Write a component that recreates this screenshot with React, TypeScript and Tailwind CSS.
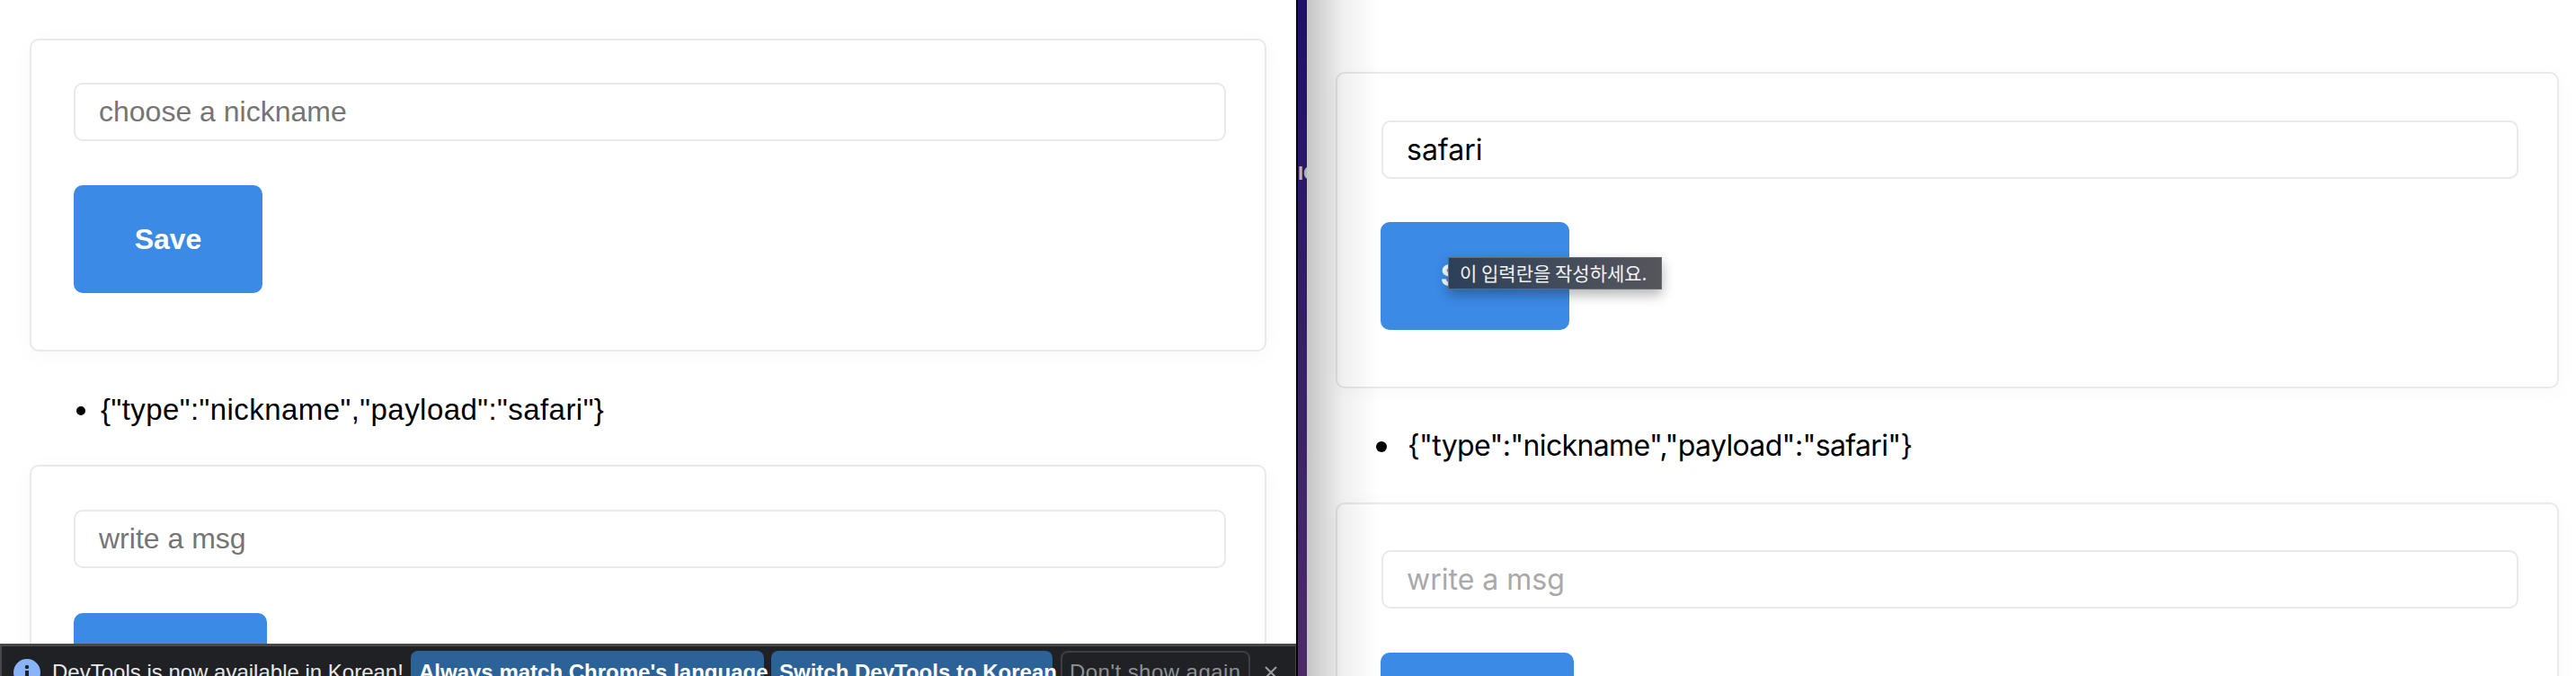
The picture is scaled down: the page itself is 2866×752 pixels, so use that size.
import React from "react";

const SANS = "font-['Liberation_Sans',Arial,sans-serif]";

function InfoIcon() {
  return (
    <svg width="30" height="30" viewBox="0 0 30 30" className="shrink-0">
      <circle cx="15" cy="15" r="15" fill="#8ab4f8" />
      <circle cx="15" cy="9" r="2.2" fill="#202124" />
      <rect x="13" y="13" width="4" height="11" fill="#202124" />
    </svg>
  );
}

function CloseIcon() {
  return (
    <svg width="16" height="16" viewBox="0 0 16 16" className="shrink-0">
      <path d="M2 1 L14 13 M14 1 L2 13" stroke="#9aa0a6" strokeWidth="2" fill="none" />
    </svg>
  );
}

function DevToolsBar() {
  return (
    <div className={`h-[36px] shrink-0 overflow-hidden flex items-start bg-[#202124] border-t-[3px] border-l-[2px] border-r-[1px] border-[#46484c] ${SANS} text-[24px] leading-[28px]`}>
      <div className="ml-[13px] mt-[14px]">
        <InfoIcon />
      </div>
      <span className="ml-[13px] mt-[15px] w-[399px] shrink-0 whitespace-nowrap text-[#e8eaed]">DevTools is now available in Korean!</span>
      <div className="mt-[5px] w-[393px] h-[50px] shrink-0 rounded-[8px] bg-[#2b6298] pl-[9px] pt-[10px] font-bold text-white whitespace-nowrap">Always match Chrome's language</div>
      <div className="ml-[8px] mt-[5px] w-[313px] h-[50px] shrink-0 rounded-[8px] bg-[#2b6298] pl-[9px] pt-[10px] font-bold text-white whitespace-nowrap">Switch DevTools to Korean</div>
      <div className="ml-[9px] mt-[5px] w-[211px] h-[50px] shrink-0 rounded-[8px] border-2 border-[#3c4043] pl-[8px] pt-[8px] tracking-[0.45px] text-[#8e9296] whitespace-nowrap">Don't show again</div>
      <div className="ml-[15px] mt-[22px]">
        <CloseIcon />
      </div>
    </div>
  );
}

function LeftPane() {
  return (
    <div className="w-[1442px] shrink-0 h-full flex flex-col bg-white">
      <div className="flex-1 min-h-0 overflow-hidden pl-[33px] pr-[33px] pt-[43px]">
        <section className="h-[348px] rounded-[10px] border-2 border-[#e9e9e9] bg-white shadow-[0_4px_24px_rgba(0,0,0,0.03)] pl-[47px] pr-[43px] pt-[47px]">
          <input
            readOnly
            placeholder="choose a nickname"
            className={`block w-full h-[65px] rounded-[10px] border-2 border-[#e9e9e9] bg-white pl-[26px] ${SANS} text-[32px] text-black outline-none placeholder:text-[#757575]`}
          />
          <button className={`block mt-[49px] w-[210px] h-[120px] rounded-[10px] bg-[#3b8ae6] ${SANS} text-[32px] font-bold text-white`}>Save</button>
        </section>
        <ul className={`list-none pl-[52px] pt-[46px] pb-[42px] ${SANS} text-[33px] leading-[38px] tracking-[0.45px] text-black`}>
          <li className="flex items-center gap-[17px]">
            <span className="mt-[2px] size-[10px] shrink-0 rounded-full bg-black" />
            {'{"type":"nickname","payload":"safari"}'}
          </li>
        </ul>
        <section className="h-[348px] rounded-[10px] border-2 border-[#e9e9e9] bg-white shadow-[0_4px_24px_rgba(0,0,0,0.03)] pl-[47px] pr-[43px] pt-[48px]">
          <input
            readOnly
            placeholder="write a msg"
            className={`block w-full h-[65px] rounded-[10px] border-2 border-[#e9e9e9] bg-white pl-[26px] ${SANS} text-[32px] text-black outline-none placeholder:text-[#757575]`}
          />
          <button className={`block mt-[50px] w-[215px] h-[120px] rounded-[10px] bg-[#3b8ae6] ${SANS} text-[32px] font-bold text-white`}>Send</button>
        </section>
      </div>
      <DevToolsBar />
    </div>
  );
}

function Divider() {
  return (
    <div className="w-[12px] shrink-0 h-full border-l-2 border-black bg-linear-to-b from-[#1f1163] to-[#4d2b6b] overflow-hidden pt-[181px]">
      <span className={`block ${SANS} text-[22px] leading-[24px] font-bold text-[#b5b5b5] whitespace-nowrap`}>IC</span>
    </div>
  );
}

function RightPane() {
  const font = "font-['Inter','Liberation_Sans',sans-serif]";
  return (
    <div className="relative flex-1 min-w-0 h-full overflow-hidden bg-white pl-[32px] pr-[19px] pt-[80px]">
      <section className="h-[352px] rounded-[10px] border-2 border-[#e9e9e9] bg-white shadow-[0_4px_24px_rgba(0,0,0,0.03)] pl-[48px] pr-[43px] pt-[52px]">
        <input
          readOnly
          value="safari"
          className={`block ml-[1px] w-[1265px] h-[65px] rounded-[10px] border-2 border-[#e9e9e9] bg-white pl-[26px] ${font} text-[32px] text-black outline-none`}
        />
        <div className="relative mt-[48px] w-[210px]">
          <button className={`block w-[210px] h-[120px] rounded-[10px] bg-[#3b8ae6] ${font} text-[32px] font-bold text-white`}>Save</button>
          <div className="absolute left-[75px] top-[39px] w-[238px] h-[36px] border border-[#666a72] bg-linear-to-r from-[#2c4058] to-[#56565c] shadow-[0_6px_14px_rgba(0,0,0,0.3)] pl-[12px] font-['Noto_Sans_CJK_KR',sans-serif] text-[21px] leading-[33px] text-[#f2f2f2] whitespace-nowrap">
            이 입력란을 작성하세요.
          </div>
        </div>
      </section>
      <ul className={`list-none pl-[45px] pt-[44px] pb-[44px] ${font} text-[32px] leading-[39px] tracking-[-0.65px] text-black`}>
        <li className="flex items-center gap-[23px]">
          <span className="mt-[3px] size-[12px] shrink-0 rounded-full bg-black" />
          {'{"type":"nickname","payload":"safari"}'}
        </li>
      </ul>
      <section className="h-[348px] rounded-[10px] border-2 border-[#e9e9e9] bg-white shadow-[0_4px_24px_rgba(0,0,0,0.03)] pl-[48px] pr-[43px] pt-[51px]">
        <input
          readOnly
          placeholder="write a msg"
          className={`block ml-[1px] w-[1265px] h-[65px] rounded-[10px] border-2 border-[#e9e9e9] bg-white pl-[26px] ${font} text-[32px] text-black outline-none placeholder:text-[#a9a9a9]`}
        />
        <button className={`block mt-[49px] w-[215px] h-[120px] rounded-[10px] bg-[#3b8ae6] ${font} text-[32px] font-bold text-white`}>Send</button>
      </section>
      <div className="pointer-events-none absolute inset-y-0 left-0 w-[80px] bg-linear-to-r from-black/[0.23] via-black/[0.06] to-transparent" />
    </div>
  );
}

export default function App() {
  return (
    <div className="flex w-[2866px] h-[752px] overflow-hidden bg-white">
      <LeftPane />
      <Divider />
      <RightPane />
    </div>
  );
}
